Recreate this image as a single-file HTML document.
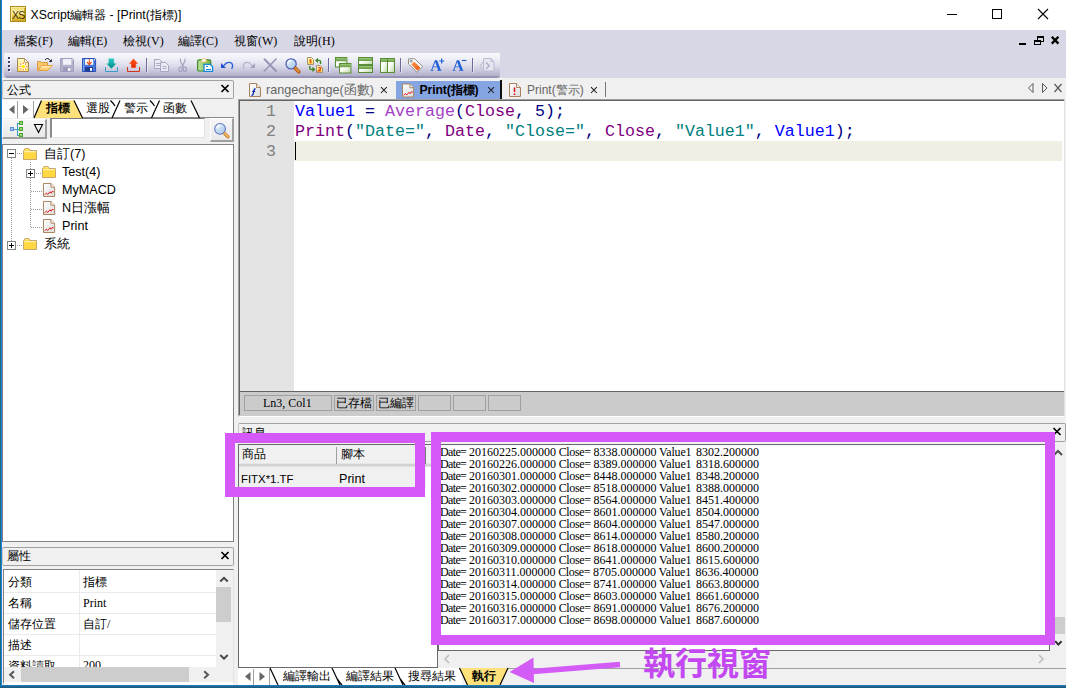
<!DOCTYPE html>
<html lang="zh-Hant">
<head>
<meta charset="utf-8">
<title>XScript編輯器 - [Print(指標)]</title>
<style>
*{box-sizing:border-box;margin:0;padding:0}
html,body{width:1066px;height:688px;overflow:hidden;background:#f0f0f0}
body{font-family:"Liberation Sans",sans-serif;font-size:12px;color:#000;position:relative}
.a{position:absolute}
.t{position:absolute;white-space:nowrap;line-height:1}
.serif{font-family:"Liberation Serif",serif}
.mono{font-family:"Liberation Mono",monospace}
svg{position:absolute;overflow:visible}
/* window chrome */
#titlebar{left:0;top:0;width:1066px;height:30px;background:#fff}
#menubar{left:0;top:30px;width:1066px;height:48px;background:#d7d7e6}
#toolbar{left:4px;top:53px;width:496px;height:25px;border-radius:2px 0 3px 4px;
 background:linear-gradient(#f8f8fc 0px,#efeff7 6px,#dcdbea 13px,#c3c1d8 19px,#b2b0cb 22.5px,#9794b4 23.5px,#9390b1 25px)}
#lborder{left:0;top:0;width:2px;height:688px;background:linear-gradient(90deg,#1f6a84 0,#1f6a84 1px,#1a84d4 1px,#1a84d4 2px)}
#bborder{left:0;top:685px;width:1066px;height:3px;background:linear-gradient(#1f86c9,#1d5f86 60%,#1f5b7c)}
/* captions */
.cap{background:#f0f0f0;border:1px solid #a0a0a0;border-left-color:#c8c8c8;border-radius:2px}
.white{background:#fff}
.btn{background:linear-gradient(#f6f6f6,#e9e9e9);border:1px solid #fff;border-right:2px solid #a0a0a0;border-bottom:2px solid #a0a0a0}
.tr{font-size:12.6px}
.sc{border:1px solid #a0a0a0;background:#cbcbcb}
/* code */
.code{font-family:"Liberation Mono",monospace;font-size:16.67px;line-height:20px;white-space:pre;position:absolute}
.kb{color:#0000ff}.kn{color:#000080}.kp{color:#800080}.kf{color:#a442c6}.ks{color:#008080}
.out{font-family:"Liberation Serif",serif;font-size:12px;line-height:12px;white-space:normal;position:absolute;color:#000;width:400px}
.out div{height:12px;white-space:pre}
.out span{display:inline-block;height:12px;vertical-align:top;white-space:pre}
.o1{width:29px;letter-spacing:-0.65px}
.o2{width:37.4px;letter-spacing:-0.35px}
.o3{width:39.5px;letter-spacing:-0.15px}
</style>
</head>
<body>
<!-- ===== title bar ===== -->
<div class="a" id="titlebar"></div>
<div class="a" style="left:10px;top:6px;width:16px;height:16px;background:linear-gradient(#ecd560 0%,#faf0a8 38%,#ead050 62%,#d3ae24 100%);border:1px solid #b08c1a;box-shadow:inset 1px 1px 0 #f7eaa0,inset -1px -1px 0 #c8a422"></div>
<div class="t" style="left:12px;top:9.6px;font-size:10.5px;color:#3a2e04;letter-spacing:-0.7px">XS</div>
<div class="t" id="title" style="left:30.5px;top:9px;font-size:12.3px">XScript編輯器 - [Print(指標)]</div>

<!-- ===== menu bar ===== -->
<div class="a" id="menubar"></div>
<div class="t serif m" style="left:14px;top:35px">檔案(F)</div>
<div class="t serif m" style="left:68px;top:35px">編輯(E)</div>
<div class="t serif m" style="left:123px;top:35px">檢視(V)</div>
<div class="t serif m" style="left:178px;top:35px">編譯(C)</div>
<div class="t serif m" style="left:234px;top:35px">視窗(W)</div>
<div class="t serif m" style="left:294px;top:35px">說明(H)</div>

<!-- ===== toolbar ===== -->
<div class="a" id="toolbar"></div>

<!-- ===== toolbar icons (page coordinates) ===== -->
<svg id="tb" style="left:0;top:0" width="510" height="80" viewBox="0 0 510 80">
<defs>
<linearGradient id="gY" x1="0" y1="0" x2="0" y2="1"><stop offset="0" stop-color="#fffcc4"/><stop offset="1" stop-color="#ffe052"/></linearGradient>
<linearGradient id="gO" x1="0" y1="0" x2="0" y2="1"><stop offset="0" stop-color="#fff3c4"/><stop offset="1" stop-color="#f6bc52"/></linearGradient>
<linearGradient id="gG" x1="0" y1="0" x2="1" y2="1"><stop offset="0" stop-color="#ffffff"/><stop offset=".45" stop-color="#fbfdf8"/><stop offset="1" stop-color="#b9d69e"/></linearGradient>
<linearGradient id="gT" x1="0" y1="0" x2="0" y2="1"><stop offset="0" stop-color="#2cccc4"/><stop offset="1" stop-color="#008484"/></linearGradient>
<linearGradient id="gR" x1="0" y1="0" x2="0" y2="1"><stop offset="0" stop-color="#ff5a20"/><stop offset="1" stop-color="#e02800"/></linearGradient>
<linearGradient id="gClip" x1="0" y1="0" x2="1" y2="0"><stop offset="0" stop-color="#bce49c"/><stop offset="1" stop-color="#74b44c"/></linearGradient>
<linearGradient id="gBand" x1="0" y1="0" x2="0" y2="1"><stop offset="0" stop-color="#9cc87a"/><stop offset="1" stop-color="#65983f"/></linearGradient>
<linearGradient id="gLens" x1="0" y1="0" x2="1" y2="1"><stop offset="0" stop-color="#f0f8ff"/><stop offset="1" stop-color="#9cc0e6"/></linearGradient>
<linearGradient id="gTag" x1="0" y1="0" x2="1" y2="1"><stop offset="0" stop-color="#ff9a50"/><stop offset="1" stop-color="#e85010"/></linearGradient>
</defs>
<!-- gripper -->
<g fill="#3f3f78"><rect x="8" y="57" width="2" height="2"/><rect x="8" y="61" width="2" height="2"/><rect x="8" y="65" width="2" height="2"/><rect x="8" y="69" width="2" height="2"/></g>
<g fill="#fff" opacity=".8"><rect x="9" y="58" width="2" height="2"/><rect x="9" y="62" width="2" height="2"/><rect x="9" y="66" width="2" height="2"/><rect x="9" y="70" width="2" height="2"/></g>
<g fill="#3f3f78"><rect x="8" y="57" width="2" height="2"/><rect x="8" y="61" width="2" height="2"/><rect x="8" y="65" width="2" height="2"/><rect x="8" y="69" width="2" height="2"/></g>
<!-- separators -->
<g shape-rendering="crispEdges"><path d="M146.5 58V72 M328.5 58V72 M400.5 58V72 M472.5 58V72" stroke="#6a6a9c"/><path d="M147.5 59V73 M329.5 59V73 M401.5 59V73 M473.5 59V73" stroke="#f4f4fa" opacity=".7"/></g>
<!-- 1 new -->
<g transform="translate(17,58)"><path d="M0.5 0.5 H7.5 L11.5 4.5 V13.5 H0.5 Z" fill="url(#gY)" stroke="#a88858"/><path d="M7.5 0.5 V4.5 H11.5 Z" fill="#fffdf0" stroke="#a88858" stroke-width=".8"/>
<circle cx="6.2" cy="8.5" r="4.2" fill="#ffffff" opacity=".9"/><g stroke="#ff7c08" stroke-width="1.1"><path d="M6.2 4.5V5.9 M6.2 11.1V12.5 M2.2 8.5H3.6 M8.8 8.5H10.2 M3.3 5.6L4.3 6.6 M8.1 10.4L9.1 11.4 M9.1 5.6L8.1 6.6 M4.3 10.4L3.3 11.4"/></g><circle cx="6.2" cy="8.5" r="1.8" fill="#ffec00"/></g>
<!-- 2 open -->
<g transform="translate(37,57)"><path d="M0.5 13.5 V4.5 H3.8 L4.8 5.5 H10.5 V8.5 H4.5 Z" fill="#f6c970" stroke="#dc9c3c"/><path d="M0.8 13.5 L4.5 8.5 H15.6 L10.8 13.5 Z" fill="url(#gO)" stroke="#e2a444"/>
<path d="M8 2.9 Q10.7 -0.2 13.3 3.6" fill="none" stroke="#1a1a1a" stroke-width="1"/><path d="M11.9 4.9 H14.9 V1.9 Z" fill="#1a1a1a"/></g>
<!-- 3 save (disabled) -->
<g transform="translate(60,58)"><path d="M0.5 0.5 H12.5 L13.5 1.5 V13.5 H0.5 Z" fill="#b3b1cc" stroke="#a19fbd"/><rect x="3" y="1" width="8.4" height="5.8" fill="#f1f1f9"/><rect x="3.2" y="9" width="7.5" height="4.6" fill="#9a98b8"/><rect x="7.9" y="9.9" width="2.4" height="3.1" fill="#f6f6fb"/><rect x="12" y="1.5" width="1" height="1" fill="#f4f4fa"/></g>
<!-- 4 save all -->
<g transform="translate(82,58)"><path d="M0.5 0.5 H12.8 L13.6 1.3 V13.5 H0.5 Z" fill="#4677dc" stroke="#2c52b4"/><path d="M1.5 1.2 V12.8" stroke="#7ea2ee" stroke-width="1"/><rect x="3.1" y="1.2" width="8.1" height="5.6" fill="#ffffff"/><rect x="3.1" y="9" width="7.8" height="4.6" fill="#1f3a90"/><rect x="8" y="10" width="2.1" height="2.8" fill="#fff"/><rect x="12" y="1.3" width="1" height="1" fill="#fff"/>
<path d="M7.3 1.2V6.4" stroke="#e8501c" stroke-width="1.1"/><path d="M5 4 L7.3 6.5 L9.6 4" fill="none" stroke="#e8501c" stroke-width="1.2"/></g>
<!-- 5 download -->
<g transform="translate(105,58)"><path d="M3.3 0.3 H9.2 V5.3 H12 L6.3 11 L0.9 5.3 H3.3 Z" fill="url(#gT)" stroke="#f4fbfb" stroke-width=".6" stroke-opacity=".7"/><path d="M0.5 9 V13.5 H12.5 V9" fill="none" stroke="#3a9ccc" stroke-width="1"/></g>
<!-- 6 upload -->
<g transform="translate(126.5,58)"><path d="M6.9 0.3 L11.9 5.9 H9.7 V10 H4.4 V5.9 H2.3 Z" fill="url(#gR)" stroke="#fff4f0" stroke-width=".6" stroke-opacity=".7"/><path d="M1 9 V13.5 H13 V9" fill="none" stroke="#d43414" stroke-width="1"/></g>
<!-- 7 copy (disabled) -->
<g transform="translate(154,59)" fill="#ebebf3" stroke="#a6a5c2"><path d="M0.5 0.5 H5.5 L8.5 3.5 V9.5 H0.5 Z"/><path d="M2 4.5H6 M2 6.5H6" stroke-width=".9"/><path d="M6.5 3.5 H11.5 L14.5 6.5 V12.5 H6.5 Z"/><path d="M8.5 7.5H12.5 M8.5 9.5H12.5" stroke-width=".9"/></g>
<!-- 8 cut (disabled) -->
<g transform="translate(178,58)" fill="none" stroke="#a09ebe" stroke-width="1.05"><path d="M2.4 0.5 V3 L5.6 9 M7 0.5 V3 L3.8 9"/><ellipse cx="2.5" cy="11.3" rx="1.6" ry="2.3"/><ellipse cx="6.9" cy="11.3" rx="1.6" ry="2.3"/></g>
<!-- 9 paste -->
<g transform="translate(197,58)"><rect x="0.6" y="1.8" width="13.2" height="11.2" rx="1.6" fill="url(#gClip)" stroke="#3f8c2a" stroke-width="1.2"/><path d="M3.8 4 H10 L9 1.4 Q7 -0.6 5 1.4 Z" fill="#ffffff" stroke="#d8b850" stroke-width=".7"/><path d="M7.5 3.8 H10 L9.4 2.4 Z" fill="#f0a830"/>
<path d="M7 6.3 H13.2 L15.6 8.7 V13.3 H7 Z" fill="#ffffff" stroke="#1787d8" stroke-width="1.3"/><path d="M8.8 8.5H11.3 M8.8 11H13.8" stroke="#1787d8" stroke-width="1" shape-rendering="crispEdges"/></g>
<!-- 10 undo -->
<path d="M221 63 V68 H226 Z" fill="#1c50d0"/><path d="M223.5 65.7 L226.6 62.9 Q229.5 61.5 231.8 63.3 Q233.5 65.5 231.7 69" fill="none" stroke="#2a60dc" stroke-width="1.3"/>
<!-- 11 redo (disabled) -->
<path d="M255 63 V68 H250 Z" fill="#a3a1be"/><path d="M252.5 65.7 L249.4 62.9 Q246.5 61.5 244.2 63.3 Q242.5 65.5 244.3 69" fill="none" stroke="#b4b3cc" stroke-width="1.2"/>
<!-- 12 delete (disabled) -->
<g transform="translate(263.5,58.5)" stroke="#9896b6" fill="none" stroke-linecap="round"><path d="M1 0.8 L12.5 12.5" stroke-width="2"/><path d="M12.5 0.5 L0.8 12.5" stroke-width="1.6"/></g>
<!-- 13 find -->
<g transform="translate(285.5,58)"><circle cx="5.6" cy="5.9" r="5.1" fill="url(#gLens)" stroke="#4a5ab2" stroke-width="1.2"/><path d="M2.6 4.6 A3.2 3.2 0 0 1 5 2.5" fill="none" stroke="#fff" stroke-width="1.5" stroke-linecap="round"/><path d="M10 10.4 L13.3 13.7" stroke="#a8540c" stroke-width="3.6" stroke-linecap="round"/><path d="M10 10.3 L13.2 13.5" stroke="#e89038" stroke-width="1.8" stroke-linecap="round"/></g>
<!-- 14 replace -->
<g transform="translate(307,57)"><path d="M0.5 0.5 H4.5 L6.5 2.5 V7.5 H0.5 Z" fill="url(#gY)" stroke="#a49070"/><path d="M3.6 2.4 V6.3" stroke="#ea5210" stroke-width="1.7" fill="none"/><path d="M2.4 3.3 L3.6 2.4" stroke="#ea5210" stroke-width="1" fill="none"/>
<path d="M9.5 8.5 H13.5 L15.5 10.5 V15.5 H9.5 Z" fill="url(#gY)" stroke="#a49070"/><path d="M11.2 10.6 H13.6 V12 L11.3 13.9 H13.9" stroke="#ea4210" stroke-width="1.2" fill="none"/>
<path d="M13.5 7 V4.6 Q13.5 3.4 12.3 3.4 H10" fill="none" stroke="#3d8722" stroke-width="1.4"/><path d="M11 0.8 L8 3.4 L11 6 Z" fill="#3d8722"/>
<path d="M2.8 9 V11.4 Q2.8 12.4 4 12.4 H6.2" fill="none" stroke="#3d8722" stroke-width="1.4"/><path d="M5.4 9.8 L8.4 12.4 L5.4 15 Z" fill="#3d8722"/></g>
<!-- 15 cascade -->
<g transform="translate(335,57)" stroke="#588c36"><rect x="0.5" y="0.5" width="11.4" height="9.5" fill="url(#gG)"/><rect x="1" y="1" width="10.4" height="3.2" fill="url(#gBand)" stroke="none"/>
<rect x="4.5" y="6.5" width="11.4" height="9.5" fill="url(#gG)"/><rect x="5" y="7" width="10.4" height="3.2" fill="url(#gBand)" stroke="none"/></g>
<!-- 16 tile h -->
<g transform="translate(358,57)" stroke="#588c36"><rect x="0.5" y="0.5" width="14" height="7" fill="url(#gG)"/><rect x="1" y="1" width="13" height="3" fill="url(#gBand)" stroke="none"/>
<rect x="0.5" y="8.5" width="14" height="7" fill="url(#gG)"/><rect x="1" y="9" width="13" height="3" fill="url(#gBand)" stroke="none"/></g>
<!-- 17 tile v -->
<g transform="translate(380,58)" stroke="#588c36"><rect x="0.5" y="0.5" width="7" height="14" fill="url(#gG)"/><rect x="7.5" y="0.5" width="7" height="14" fill="url(#gG)"/><rect x="1" y="1" width="6" height="3" fill="url(#gBand)" stroke="none"/><rect x="8" y="1" width="6" height="3" fill="url(#gBand)" stroke="none"/></g>
<!-- 18 tag -->
<path d="M408.5 58.8 H414.6 L422.8 66.7 L417 72.3 L408.5 64 Z" fill="#fcfcfe" stroke="#8c8c8c" stroke-width="1"/><path d="M411.2 64.4 L414 61.6 L420.6 67.7 L417.3 70.7 Z" fill="url(#gTag)"/><circle cx="411.2" cy="61.2" r="1" fill="#fff" stroke="#555" stroke-width=".7"/>
<!-- 19 20 A+ A- -->
<path d="M433.6 70.24V70.8H430.45V70.24L431.23 70.03L434.91 60.37H437.14L440.81 70.03L441.59 70.24V70.8H436.99V70.24L438.18 70.03L437.2 67.35H433.22L432.28 70.03ZM435.25 61.93 433.54 66.5H436.9Z" fill="#1e5ed8"/><path d="M439.2 61 H444.2 M441.7 58.5 V63.5" stroke="#1e5ed8" stroke-width="1.2"/>
<path d="M455.6 70.24V70.8H452.45V70.24L453.23 70.03L456.91 60.37H459.14L462.81 70.03L463.59 70.24V70.8H458.99V70.24L460.18 70.03L459.2 67.35H455.22L454.28 70.03ZM457.25 61.93 455.54 66.5H458.9Z" fill="#1e5ed8"/><path d="M461.7 60.5 H466.4" stroke="#1e5ed8" stroke-width="1.2"/>
<!-- 21 doc (disabled) -->
<g transform="translate(479.5,58)"><path d="M4 0.5 H11.5 L14.5 3.5 V13 H4 Z" fill="#e6e6f0" stroke="#bcbbd3"/><path d="M11.5 0.5 V3.5 H14.5" fill="none" stroke="#bcbbd3"/><path d="M3.2 4.5 L0.5 7.8 L3.2 11" fill="none" stroke="#c8c7dc" stroke-width="1.2"/><path d="M6.5 4.5 L9.8 7.8 L6.5 11" fill="none" stroke="#aeacc9" stroke-width="1.3"/></g>
</svg>

<!-- ===== left dock: 公式 ===== -->
<div class="a cap" style="left:2px;top:80px;width:232px;height:19px"></div>
<div class="t" style="left:7px;top:83.5px;font-size:12px">公式</div>
<div class="a white" style="left:2px;top:100px;width:198px;height:18px;clip-path:polygon(0 0,189px 0,197.5px 100%,0 100%)"></div>
<div class="t b" style="left:46px;top:102px;font-weight:bold;z-index:3">指標</div>
<div class="t" style="left:86px;top:102px">選股</div>
<div class="t" style="left:124px;top:102px">警示</div>
<div class="t" style="left:163px;top:102px">函數</div>
<div class="a" style="left:82px;top:117px;width:152px;height:1px;background:#8a8a8a"></div>
<!-- search row -->
<div class="a btn" style="left:2px;top:119px;width:45px;height:20px"></div>
<div class="a white" style="left:50px;top:118px;width:155px;height:20px;border:1px solid #e3e3e3;border-top:1px solid #7a7a7a;border-left:2px solid #8a8a8a"></div>
<div class="a btn" style="left:210px;top:118px;width:24px;height:24px"></div>
<!-- tree -->
<div class="a white" style="left:2px;top:144px;width:232px;height:398px;border:1px solid #828282"></div>
<div class="t tr" style="left:44px;top:148px">自訂(7)</div>
<div class="t tr" style="left:62px;top:166px">Test(4)</div>
<div class="t tr" style="left:62px;top:184px">MyMACD</div>
<div class="t tr" style="left:62px;top:202px">N日漲幅</div>
<div class="t tr" style="left:62px;top:220px">Print</div>
<div class="t tr" style="left:44px;top:238px">系統</div>

<!-- ===== left dock: 屬性 ===== -->
<div class="a cap" style="left:2px;top:547px;width:232px;height:19px"></div>
<div class="t" style="left:7px;top:550px">屬性</div>
<div class="a white" style="left:3px;top:569px;width:231px;height:98px;border:1px solid #828282;border-right:1px solid #e3e3e3;border-bottom:0"></div>
<div class="a" style="left:216px;top:570px;width:17px;height:97px;background:#f0f0f0"></div>
<div class="a" style="left:216px;top:587px;width:15px;height:35px;background:#cdcdcd"></div>
<div class="a" style="left:4px;top:592px;width:212px;height:1px;background:#eaeaea"></div>
<div class="a" style="left:4px;top:613px;width:212px;height:1px;background:#eaeaea"></div>
<div class="a" style="left:4px;top:634px;width:212px;height:1px;background:#eaeaea"></div>
<div class="a" style="left:4px;top:655px;width:212px;height:1px;background:#eaeaea"></div>
<div class="a" style="left:79px;top:570px;width:1px;height:97px;background:#eaeaea"></div>
<div class="t" style="left:8px;top:576px">分類</div>
<div class="t" style="left:8px;top:597px">名稱</div>
<div class="t" style="left:8px;top:618px">儲存位置</div>
<div class="t" style="left:8px;top:639px">描述</div>
<div class="a" style="left:4px;top:656px;width:75px;height:11px;overflow:hidden"><div class="t" style="left:4px;top:3.5px">資料讀取</div></div>
<div class="t" style="left:83px;top:576px">指標</div>
<div class="t serif" style="left:83px;top:597px">Print</div>
<div class="t serif" style="left:83px;top:618px">自訂/</div>
<div class="a" style="left:80px;top:656px;width:60px;height:11px;overflow:hidden"><div class="t serif" style="left:3px;top:3px">200</div></div>
<!-- h scrollbar -->
<div class="a" style="left:3px;top:667px;width:231px;height:18px;background:#f0f0f0;border-left:1px solid #828282;border-right:1px solid #e3e3e3;border-bottom:3px solid #fff"></div>
<div class="a" style="left:21px;top:667px;width:168px;height:15px;background:#cdcdcd"></div>

<!-- ===== splitter / mdi tabs ===== -->
<div class="a" style="left:396px;top:81px;width:104.5px;height:18px;background:#84a5e2"></div>
<div class="a" style="left:500.3px;top:80px;width:1.3px;height:19.5px;background:#111"></div>
<div class="a" style="left:605px;top:82px;width:1px;height:15px;background:#777"></div>
<div class="t" style="left:266px;top:84px;color:#666;font-size:12.6px">rangechange(函數)</div>
<div class="t" style="left:419.5px;top:84px;font-weight:bold;font-size:12.2px;letter-spacing:-0.1px">Print(指標)</div>
<div class="t" style="left:527px;top:84px;color:#666;font-size:12px">Print(警示)</div>

<!-- ===== editor ===== -->
<div class="a" style="left:238px;top:99px;width:827px;height:318px;background:#cbcbcb;border:1px solid #a0a0a0;border-right:1px solid #e3e3e3;border-bottom:1px solid #fff"></div>
<div class="a" style="left:239px;top:100px;width:825px;height:315px;background:#cbcbcb;border-left:1px solid #646464"></div>
<div class="a" style="left:239px;top:100px;width:825px;height:292px;background:#fff;border:1px solid #646464;border-right:0;border-bottom:1px solid #646464"></div>
<div class="a" style="left:240px;top:101px;width:54px;height:290px;background:#e4e4e4"></div>
<div class="a" style="left:294px;top:141px;width:768px;height:20px;background:#efefe3"></div>
<div class="code" style="left:240px;top:102px;color:#808080;width:36px;text-align:right">1
2
3</div>
<div class="code" style="left:295px;top:102px"><span class="kb">Value1</span><span class="kn"> = </span><span class="kf">Average</span><span class="kn">(</span><span class="kp">Close</span><span class="kn">, 5);</span>
<span class="kp">Print</span><span class="kn">(</span><span class="ks">"Date="</span><span class="kn">, </span><span class="kp">Date</span><span class="kn">, </span><span class="ks">"Close="</span><span class="kn">, </span><span class="kp">Close</span><span class="kn">, </span><span class="ks">"Value1"</span><span class="kn">, </span><span class="kb">Value1</span><span class="kn">);</span></div>
<div class="a" style="left:295px;top:142px;width:1px;height:18px;background:#000"></div>
<!-- editor status -->
<div class="a" style="left:240px;top:392px;width:824px;height:23px;background:#cbcbcb"></div>
<div class="a sc" style="left:244px;top:395px;width:88px;height:16px"></div>
<div class="a sc" style="left:334px;top:395px;width:40px;height:16px"></div>
<div class="a sc" style="left:376px;top:395px;width:40px;height:16px"></div>
<div class="a sc" style="left:418px;top:395px;width:33px;height:16px"></div>
<div class="a sc" style="left:453px;top:395px;width:33px;height:16px"></div>
<div class="a sc" style="left:488px;top:395px;width:33px;height:16px"></div>
<div class="t serif" style="left:263px;top:397px">Ln3, Col1</div>
<div class="t" style="left:336px;top:397px">已存檔</div>
<div class="t" style="left:378px;top:397px">已編譯</div>


<!-- ===== bottom dock: 訊息 ===== -->
<div class="a cap" style="left:238px;top:423px;width:828px;height:19px"></div>
<div class="t" style="left:242px;top:427px">訊息</div>
<!-- list -->
<div class="a white" style="left:238px;top:444px;width:200px;height:224px;border:1px solid #696969"></div>
<div class="a" style="left:239px;top:445px;width:198px;height:22px;background:linear-gradient(#f0f0f0 0,#f0f0f0 18px,#c9c9c9 20px,#e8e8e8 22px)"></div>
<div class="a" style="left:239px;top:467px;width:187px;height:22px;background:#f0f0f0"></div>
<div class="a" style="left:336px;top:447px;width:1px;height:17px;background:#a0a0a0"></div>
<div class="a" style="left:425px;top:447px;width:1px;height:17px;background:#777"></div>
<div class="t" style="left:242px;top:448px">商品</div>
<div class="t" style="left:341px;top:448px">腳本</div>
<div class="t" style="left:241px;top:473.5px;font-size:11.4px">FITX*1.TF</div>
<div class="t tr" style="left:339px;top:473px">Print</div>
<!-- output -->
<div class="a white" style="left:438px;top:444px;width:612px;height:207px;border:1px solid #696969"></div>
<div class="a" style="left:1050px;top:443px;width:16px;height:208px;background:#f0f0f0"></div>
<div class="a" style="left:1055px;top:617px;width:10px;height:17px;background:#cdcdcd"></div>
<div class="a" style="left:438px;top:668px;width:628px;height:1px;background:#a0a0a0"></div>
<!-- bottom tabs -->
<div class="a white" style="left:238px;top:668px;width:224px;height:17px"></div>
<div class="t" style="left:283px;top:670px">編譯輸出</div>
<div class="t" style="left:346px;top:670px">編譯結果</div>
<div class="t" style="left:408px;top:670px">搜尋結果</div>
<div class="out" style="left:440px;top:446px"><div><span class="o1">Date= </span><span>20160225.000000</span><span class="o2"> Close= </span><span>8338.000000</span><span class="o3"> Value1 </span><span>8302.200000</span></div>
<div><span class="o1">Date= </span><span>20160226.000000</span><span class="o2"> Close= </span><span>8389.000000</span><span class="o3"> Value1 </span><span>8318.600000</span></div>
<div><span class="o1">Date= </span><span>20160301.000000</span><span class="o2"> Close= </span><span>8448.000000</span><span class="o3"> Value1 </span><span>8348.200000</span></div>
<div><span class="o1">Date= </span><span>20160302.000000</span><span class="o2"> Close= </span><span>8518.000000</span><span class="o3"> Value1 </span><span>8388.000000</span></div>
<div><span class="o1">Date= </span><span>20160303.000000</span><span class="o2"> Close= </span><span>8564.000000</span><span class="o3"> Value1 </span><span>8451.400000</span></div>
<div><span class="o1">Date= </span><span>20160304.000000</span><span class="o2"> Close= </span><span>8601.000000</span><span class="o3"> Value1 </span><span>8504.000000</span></div>
<div><span class="o1">Date= </span><span>20160307.000000</span><span class="o2"> Close= </span><span>8604.000000</span><span class="o3"> Value1 </span><span>8547.000000</span></div>
<div><span class="o1">Date= </span><span>20160308.000000</span><span class="o2"> Close= </span><span>8614.000000</span><span class="o3"> Value1 </span><span>8580.200000</span></div>
<div><span class="o1">Date= </span><span>20160309.000000</span><span class="o2"> Close= </span><span>8618.000000</span><span class="o3"> Value1 </span><span>8600.200000</span></div>
<div><span class="o1">Date= </span><span>20160310.000000</span><span class="o2"> Close= </span><span>8641.000000</span><span class="o3"> Value1 </span><span>8615.600000</span></div>
<div><span class="o1">Date= </span><span>20160311.000000</span><span class="o2"> Close= </span><span>8705.000000</span><span class="o3"> Value1 </span><span>8636.400000</span></div>
<div><span class="o1">Date= </span><span>20160314.000000</span><span class="o2"> Close= </span><span>8741.000000</span><span class="o3"> Value1 </span><span>8663.800000</span></div>
<div><span class="o1">Date= </span><span>20160315.000000</span><span class="o2"> Close= </span><span>8603.000000</span><span class="o3"> Value1 </span><span>8661.600000</span></div>
<div><span class="o1">Date= </span><span>20160316.000000</span><span class="o2"> Close= </span><span>8691.000000</span><span class="o3"> Value1 </span><span>8676.200000</span></div>
<div><span class="o1">Date= </span><span>20160317.000000</span><span class="o2"> Close= </span><span>8698.000000</span><span class="o3"> Value1 </span><span>8687.600000</span></div></div>

<!-- ===== vector overlay (page coordinates) ===== -->
<svg id="ov" style="left:0;top:0" width="1066" height="688" viewBox="0 0 1066 688">
<defs>
<linearGradient id="gFold" x1="0" y1="0" x2="0" y2="1"><stop offset="0" stop-color="#ffe88a"/><stop offset="1" stop-color="#f6c02c"/></linearGradient>
<linearGradient id="gDoc" x1="0" y1="0" x2="1" y2="1"><stop offset="0" stop-color="#ffffff"/><stop offset="1" stop-color="#dcdcdc"/></linearGradient>
<g id="folder"><path d="M0.5 2.5 V11.5 H13.5 V2.5 H7 L6 0.5 H2 L1 2.5 Z" fill="#ffd842" stroke="#c7a76c" stroke-width="1"/><path d="M1.2 3.6H12.8" stroke="#fff1b0" stroke-width="1.2"/><path d="M2.3 1.4H5.7" stroke="#ffe98c" stroke-width="1"/></g>
<g id="chartdoc"><path d="M0.5 0.5 H8.5 L12.5 4.5 V14.5 H0.5 Z" fill="url(#gDoc)" stroke="#a8825c" stroke-width="1.05"/><path d="M8.5 0.5 V4.5 H12.5" fill="#faf7f2" stroke="#a8825c" stroke-width="1"/><path d="M1.6 12.8 L3.8 10.8 L5 12.4 L7.6 9.4 L8.7 11 L10.4 8.6 L11.3 9.8" fill="none" stroke="#e01010" stroke-width="1"/></g>
<g id="plus"><rect x="0.5" y="0.5" width="8" height="8" fill="#fff" stroke="#848484"/><path d="M2 4.5H7M4.5 2V7" stroke="#000" stroke-width="1"/></g>
<g id="minus"><rect x="0.5" y="0.5" width="8" height="8" fill="#fff" stroke="#848484"/><path d="M2 4.5H7" stroke="#000" stroke-width="1"/></g>
<g id="mag"><circle cx="5.6" cy="5.9" r="5.4" fill="url(#gLens)" stroke="#6a78c4" stroke-width="1.1"/><path d="M2.8 4.6 A3.2 3.2 0 0 1 5 2.7" fill="none" stroke="#fff" stroke-width="1.4" stroke-linecap="round"/><path d="M10.3 10.7 L13.4 13.8" stroke="#d08838" stroke-width="3.4" stroke-linecap="round"/><path d="M10.3 10.5 L13.3 13.5" stroke="#f2b870" stroke-width="1.6" stroke-linecap="round"/></g>
</defs>

<!-- main window buttons -->
<g stroke="#000" stroke-width="1" fill="none" shape-rendering="crispEdges">
<path d="M947 14.5H957"/><rect x="992.5" y="9.5" width="9" height="9"/>
</g>
<path d="M1038 9 L1048 19 M1048 9 L1038 19" stroke="#000" stroke-width="1.1" fill="none"/>
<!-- mdi child buttons -->
<g fill="none" stroke="#000" shape-rendering="crispEdges">
<path d="M1019 44H1026" stroke-width="2"/>
<rect x="1037" y="36.5" width="6" height="4.5" stroke-width="1"/><path d="M1037 37H1043" stroke-width="2"/>
<rect x="1034.5" y="40" width="6" height="4.5" stroke-width="1" fill="#d7d7e6"/><path d="M1034 40.5H1041" stroke-width="2"/>
</g>
<path d="M1051.8 36.8 L1058.4 43.6 M1058.4 36.8 L1051.8 43.6" stroke="#000" stroke-width="2.3" fill="none"/>
<!-- mdi tab nav -->
<g fill="none" stroke="#5a5a5a" stroke-width="1">
<path d="M1033 83.5 L1028.5 88 L1033 92.5 Z"/><path d="M1042.5 83.5 L1047 88 L1042.5 92.5 Z"/>
<path d="M1054.5 84 L1061.5 92 M1061.5 84 L1054.5 92" stroke-width="1.2"/>
</g>
<!-- mdi tab close x -->
<g stroke="#1a1a1a" stroke-width="1.05" fill="none">
<path d="M381 87.2 L386.8 93 M386.8 87.2 L381 93"/>
<path d="M488.2 87.2 L494 93 M494 87.2 L488.2 93"/>
<path d="M591 87.2 L596.8 93 M596.8 87.2 L591 93"/>
</g>
<!-- mdi tab icons -->
<g transform="translate(249,83)"><path d="M0.5 0.5 H7.5 L11.5 4.5 V13.5 H0.5 Z" fill="url(#gDoc)" stroke="#a8825c"/><path d="M7.5 0.5 V4.5 H11.5" fill="#f4efe8" stroke="#a8825c"/><path d="M2.5 12.2 Q3.8 12.6 4.2 10.8 L5 7.2 Q5.4 5.6 6.6 6.1 M3.3 8.4 H6.2" fill="none" stroke="#0a22b0" stroke-width="1.25"/></g>
<g transform="translate(402,83.5) scale(0.93)"><use href="#chartdoc"/></g>
<g transform="translate(509,83)"><path d="M0.5 0.5 H7.5 L11.5 4.5 V13.5 H0.5 Z" fill="url(#gDoc)" stroke="#a8825c"/><path d="M7.5 0.5 V4.5 H11.5" fill="#f4efe8" stroke="#a8825c"/><path d="M5.5 4.5 V9" stroke="#e01818" stroke-width="1.6"/><circle cx="5.5" cy="11.2" r="0.9" fill="#e01818"/></g>

<!-- panel close x -->
<g stroke="#000" stroke-width="1.7" fill="none">
<path d="M221.5 85 L228.5 92 M228.5 85 L221.5 92"/>
<path d="M221.5 552 L228.5 559 M228.5 552 L221.5 559"/>
<path d="M1053.5 428 L1060.5 435 M1060.5 428 L1053.5 435"/>
</g>

<!-- left tabs -->
<path d="M34 118 L41.5 100.5 H74 L82.5 118 Z" fill="#ffe17c"/>
<g stroke="#000" stroke-width="1.2" fill="none">
<path d="M34 118 L41.5 100.5"/><path d="M74 100.5 L82.5 118"/>
<path d="M112 118 L120 100.5 M115 106 Q113 103 110.5 100.5"/>
<path d="M151.5 118 L159.5 100.5 M154.5 106 Q152.5 103 150 100.5"/>
<path d="M191 100.5 L199.5 118"/>
</g>
<path d="M14.5 105 V114 L9 109.5 Z M23 105 V114 L28.5 109.5 Z" fill="#666"/>
<path d="M17.5 101 V118 M33 101 V118" stroke="#a0a0a0" stroke-width="1" shape-rendering="crispEdges"/>
<!-- search row icons -->
<g shape-rendering="crispEdges"><path d="M14 129.5H17.5V123.5H19 M17.5 129.5H19 M17.5 129.5V135.5H19" stroke="#3c9cc4" fill="none"/>
<rect x="10.5" y="127.5" width="3" height="3" fill="#a8c8f0" stroke="#5a8ad8"/>
<rect x="19.5" y="121.5" width="3" height="3" fill="#9ad47a" stroke="#48a830"/>
<rect x="19.5" y="127.5" width="3" height="3" fill="#9ad47a" stroke="#48a830"/>
<rect x="19.5" y="133.5" width="3" height="3" fill="#9ad47a" stroke="#48a830"/></g>
<path d="M34.5 124.5 H42.5 L38.5 132.5 Z" fill="none" stroke="#000" stroke-width="1.1"/>
<use href="#mag" transform="translate(214.5,123)"/>

<!-- tree -->
<g stroke="#9a9a9a" stroke-width="1" stroke-dasharray="1 1" fill="none" shape-rendering="crispEdges">
<path d="M11.5 158 V241"/><path d="M30.5 162 V228"/>
<path d="M17 153.5 H23"/><path d="M36 173.5 H42"/><path d="M31 191.5 H42"/><path d="M31 209.5 H42"/><path d="M31 227.5 H42"/><path d="M17 245.5 H23"/>
</g>
<use href="#minus" x="7" y="149"/><use href="#plus" x="26" y="169"/><use href="#plus" x="7" y="241"/>
<use href="#folder" x="23" y="148"/><use href="#folder" x="42" y="166"/><use href="#folder" x="23" y="238"/>
<g transform="translate(43,183) scale(0.93)"><use href="#chartdoc"/></g>
<g transform="translate(43,201) scale(0.93)"><use href="#chartdoc"/></g>
<g transform="translate(43,219) scale(0.93)"><use href="#chartdoc"/></g>

<!-- property grid scroll arrows -->
<g fill="none" stroke="#444" stroke-width="1.9">
<path d="M220.3 581.5 L224 577.8 L227.7 581.5"/><path d="M220.3 655 L224 658.7 L227.7 655"/>
<path d="M14 671.2 L10.2 674.7 L14 678.2" stroke-width="2.1" stroke="#5a5a5a"/><path d="M204.2 671.2 L208 674.7 L204.2 678.2" stroke-width="2.1" stroke="#5a5a5a"/>
</g>
<!-- output scroll arrows -->
<g fill="none" stroke-width="1.6">
<path d="M1054 455 L1058 451 L1062 455" stroke="#505050" stroke-width="2"/><path d="M1055.2 641.2 L1058.3 644.6 L1061.5 641.2" stroke="#303030" stroke-width="2"/>
<path d="M449 655 L445 659 L449 663" stroke="#bdbdbd"/><path d="M1039 655 L1043 659 L1039 663" stroke="#bdbdbd"/>
</g>

<!-- bottom tabs -->
<path d="M459.5 668 H508 L500 685 H467 Z" fill="#ffe17c"/>
<g stroke="#000" stroke-width="1.2" fill="none">
<path d="M270 668 L278 685"/>
<path d="M332 668 L340 685 M337.5 679 Q339.5 682 342 685"/>
<path d="M395 668 L403 685 M400.5 679 Q402.5 682 405 685"/>
<path d="M459.5 668 L467.5 685"/><path d="M508 668 L500 685"/>
</g>
<path d="M250.5 672 V681 L245 676.5 Z M259.5 672 V681 L265 676.5 Z" fill="#666"/>
<path d="M253.5 669 V685 M269.5 669 V685" stroke="#a0a0a0" stroke-width="1" shape-rendering="crispEdges"/>
</svg>
<div class="t" style="left:472px;top:670px;font-weight:bold">執行</div>

<!-- ===== annotations ===== -->
<div class="a" style="left:225px;top:433px;width:200px;height:64px;border:10px solid #d558f8"></div>
<div class="a" style="left:431px;top:432px;width:624px;height:213px;border:10px solid #d558f8"></div>
<svg id="arrow" style="left:0;top:0" width="1066" height="688" viewBox="0 0 1066 688">
<path d="M620 664.5 L533 671.5" stroke="#d45cf6" stroke-width="5.5" fill="none"/>
<path d="M509.5 672 L533.5 657.5 L534 683 Z" fill="#d45cf6"/>
</svg>
<div class="t" id="big" style="left:643px;top:648px;width:128px;height:33px;font-family:'Liberation Sans','Noto Sans CJK TC',sans-serif;font-size:32px;font-weight:bold;color:#c448f2">執行視窗</div>

<!-- ===== frame ===== -->
<div class="a" id="lborder"></div>
<div class="a" id="bborder"></div>
</body>
</html>
